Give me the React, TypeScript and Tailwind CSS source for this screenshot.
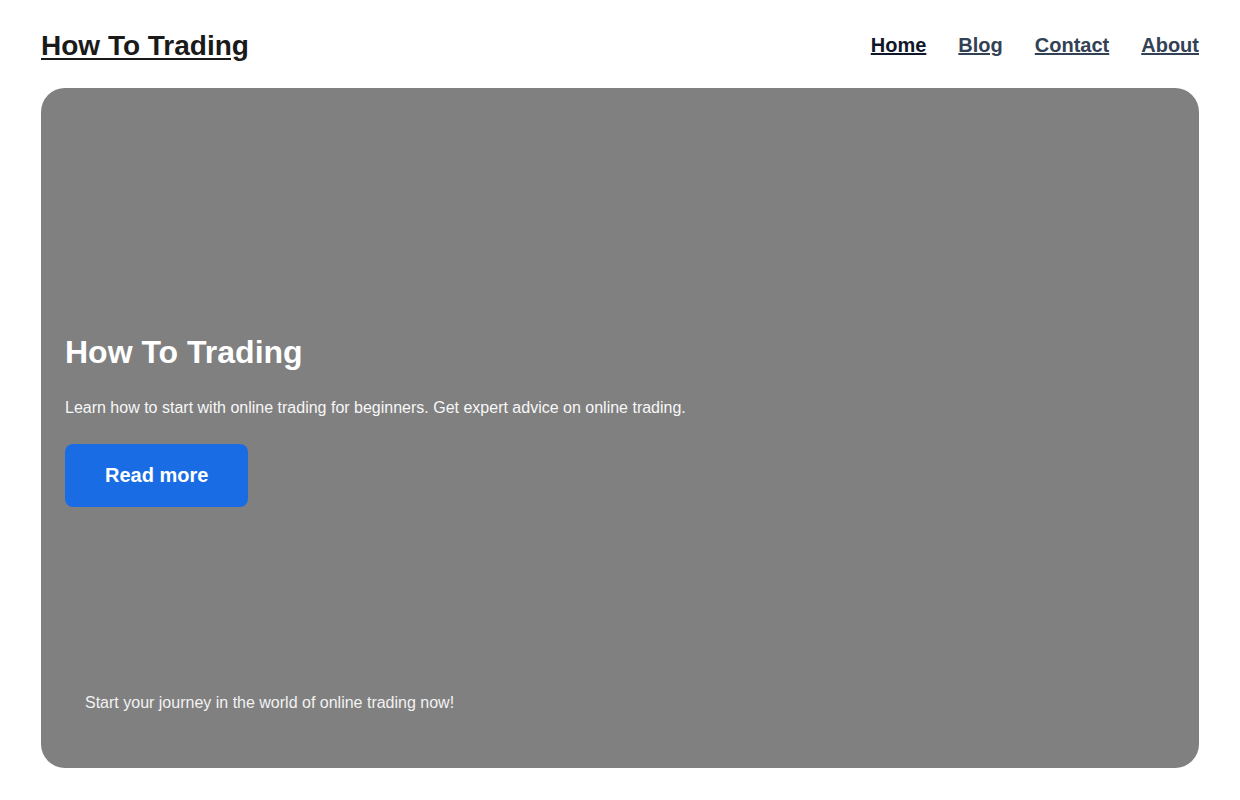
import React from "react";

const links = ["Home", "Blog", "Contact", "About"];

export default function App() {
  return (
    <div className="min-h-screen bg-white px-[41px] font-['Liberation_Sans',Arial,sans-serif]">
      <header className="flex h-[88px] items-center justify-between pt-[3px]">
        <a href="#" className="text-[28px] font-bold text-[#1a1a1a] underline underline-offset-[3px]">
          How To Trading
        </a>
        <nav className="flex gap-8 pb-[2px]">
          {links.map((l, i) => (
            <a
              key={l}
              href="#"
              className={
                i === 0
                  ? "text-[20px] font-bold text-[#0f172a] underline"
                  : "text-[20px] font-bold text-[#334155] underline"
              }
            >
              {l}
            </a>
          ))}
        </nav>
      </header>

      <section className="flex h-[680px] flex-col rounded-3xl bg-[#808080] px-6 pb-[53px] pt-[245px] text-white">
        <h1 className="text-[32px] font-bold leading-[38px]">How To Trading</h1>
        <p className="mt-[25px] text-base leading-6 text-[#f7f7f7]">
          Learn how to start with online trading for beginners. Get expert advice on online trading.
        </p>
        <div className="mt-6">
          <button className="h-[63px] rounded-lg bg-[#1a6ce5] px-10 pb-[1px] text-[20px] font-bold text-white">
            Read more
          </button>
        </div>
        <p className="mt-auto px-5 text-base leading-6 text-[#f2f2f2]">
          Start your journey in the world of online trading now!
        </p>
      </section>
    </div>
  );
}
